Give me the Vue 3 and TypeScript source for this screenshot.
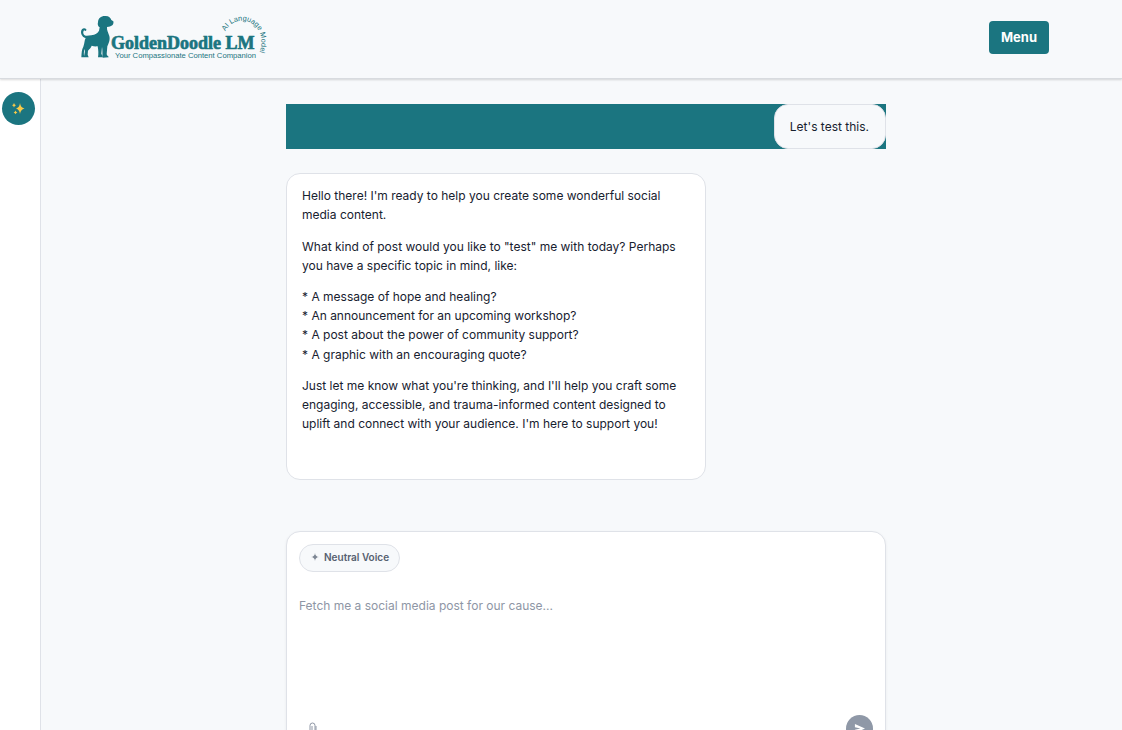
<script setup lang="ts">
import { ref } from 'vue'

interface Message {
  role: 'user' | 'assistant'
  paragraphs: string[]
}

const messages: Message[] = [
  { role: 'user', paragraphs: ["Let's test this."] },
  {
    role: 'assistant',
    paragraphs: [
      "Hello there! I'm ready to help you create some wonderful social media content.",
      'What kind of post would you like to "test" me with today? Perhaps you have a specific topic in mind, like:',
      '* A message of hope and healing?\n* An announcement for an upcoming workshop?\n* A post about the power of community support?\n* A graphic with an encouraging quote?',
      "Just let me know what you're thinking, and I'll help you craft some engaging, accessible, and trauma-informed content designed to uplift and connect with your audience. I'm here to support you!",
    ],
  },
]

const draft = ref('')
</script>

<template>
  <div class="app">
    <header class="header">
      <a class="brand" href="#" aria-label="GoldenDoodle LM home">
        <svg class="logo" viewBox="30 27 570 144" aria-hidden="true">
          <path
            class="dog"
            d="M84 55 C84 42 94 35 107 36 C117 36 122 42 124 48 L130 52 C132 60 127 68 116 68 L111 69 C110 79 115 87 118 96 C121 107 116 119 112 127 L110 151 C111 156 116 156 116 160 L98 161 C97 155 98 139 96 129 L94 149 C96 154 98 155 97 160 L84 160 C86 150 85 137 83 127 C76 128 70 127 65 125 C63 132 58 135 54 140 L53 152 L56 160 L42 160 C43 149 46 141 45 135 C42 141 40 148 43 159 L34 160 C35 147 35 137 40 128 C44 119 43 108 47 102 C39 101 33 92 33 84 C33 74 43 69 49 76 C50 80 46 83 43 79 C39 81 38 90 44 94 C49 97 56 95 64 94 C76 92 83 88 87 80 L89 70 C84 68 82 61 84 55 Z"
          />
          <text class="word" x="123" y="136">GoldenDoodle LM</text>
          <text class="tag" x="135" y="161">Your Compassionate Content Companion</text>
          <path
            id="logo-arc"
            class="arc"
            d="M466 82 C480 55 505 47 528 51 C558 58 574 85 574 112 C574 128 571 140 565 156 L558 170"
          />
          <text class="ring"><textPath href="#logo-arc">AI Language Model</textPath></text>
        </svg>
      </a>
      <button class="menu" type="button">Menu</button>
    </header>

    <div class="body">
      <aside class="rail">
        <button class="spark" type="button" aria-label="New chat">
          <svg viewBox="0 0 14 14" aria-hidden="true">
            <path class="gold" d="M8 1 Q8.5 5.5 12.5 6.5 Q8.5 7.5 8 12 Q7.5 7.5 4 6.5 Q7.5 5.5 8 1Z" />
            <path class="gold" d="M2 1 Q2.5 2.7 4 3.2 Q2.5 3.7 2 5.4 Q1.5 3.7 0 3.2 Q1.5 2.7 2 1Z" />
            <path class="gold" d="M3.5 8.5 Q3.9 10 5.4 10.4 Q3.9 10.8 3.5 12.3 Q3.1 10.8 1.6 10.4 Q3.1 10 3.5 8.5Z" />
          </svg>
        </button>
      </aside>

      <main class="main">
        <div class="column">
          <section v-for="(message, i) in messages" :key="i" :class="['message', message.role]">
            <div class="bubble">
              <p v-for="(paragraph, j) in message.paragraphs" :key="j">{{ paragraph }}</p>
            </div>
          </section>

          <form class="composer" @submit.prevent>
            <button class="voice" type="button">
              <svg viewBox="0 0 10 10" aria-hidden="true">
                <path d="M5 1 Q5.3 4.7 9 5 Q5.3 5.3 5 9 Q4.7 5.3 1 5 Q4.7 4.7 5 1Z" />
              </svg>
              <span>Neutral Voice</span>
            </button>
            <textarea
              v-model="draft"
              class="prompt"
              aria-label="Message"
              placeholder="Fetch me a social media post for our cause..."
            ></textarea>
            <div class="tools">
              <button class="attach" type="button" aria-label="Attach a file">
                <svg viewBox="0 0 10 14" aria-hidden="true">
                  <path d="M2 10 V3.5 Q2 1 4.5 1 Q7 1 7 3.5 V10 Q7 12.5 5 12.5 Q4 12.5 4 10.5 V4 M8 4 V10" />
                </svg>
              </button>
              <button class="send" type="submit" aria-label="Send">
                <svg viewBox="0 0 12 12" aria-hidden="true">
                  <path d="M1 1 L12 6 L1 11 V7.3 L7 6 L1 4.7Z" />
                </svg>
              </button>
            </div>
          </form>
        </div>
      </main>
    </div>
  </div>
</template>

<style>
body {
  margin: 0;
}
</style>

<style scoped>
.app {
  --teal: #1b7580;
  --line: #dfe2e8;
  height: 100vh;
  display: flex;
  flex-direction: column;
  overflow: hidden;
  background: #f7f9fb;
  color: #17212f;
  font: 12px/1.6 Inter, "Liberation Sans", sans-serif;
}
*,
*::before {
  box-sizing: border-box;
}
button,
textarea {
  font: inherit;
}
button {
  padding: 0;
  border: 0;
  cursor: pointer;
}
.header {
  position: relative;
  flex: none;
  display: flex;
  align-items: center;
  justify-content: space-between;
  padding: 13px 73px 17px 80px;
  border-bottom: 1px solid #d8dbdf;
  box-shadow: 0 1px 2px rgb(0 0 0 / 15%);
}
.brand,
.logo {
  display: block;
}
.logo {
  width: 190px;
  height: 48px;
  overflow: visible;
}
.dog,
.word,
.tag,
.ring {
  fill: var(--teal);
}
.word {
  font: bold 54px "Liberation Serif", serif;
  stroke: var(--teal);
  stroke-width: 2px;
}
.tag {
  font: 23px "Liberation Sans", sans-serif;
}
.ring {
  font: 22px "Liberation Sans", sans-serif;
}
.arc {
  fill: none;
}
.menu {
  height: 33px;
  padding: 0 12px;
  border-radius: 4px;
  background: var(--teal);
  color: #fff;
  font-size: 13px;
  font-weight: 700;
}
.body {
  flex: 1;
  min-height: 0;
  display: flex;
}
.rail {
  flex: none;
  width: 41px;
  padding: 13px 2px;
  border-right: 1px solid var(--line);
  background: #fff;
}
.spark {
  width: 33px;
  height: 33px;
  display: grid;
  place-items: center;
  border-radius: 50%;
  background: var(--teal);
}
.spark svg {
  width: 14px;
  height: 14px;
}
.gold {
  fill: #f7c948;
}
.main {
  flex: 1;
  padding: 25px 16px 0 25px;
}
.column {
  max-width: 600px;
  margin: 0 auto;
}
.message {
  display: flex;
  margin-bottom: 24px;
}
.user {
  justify-content: flex-end;
  background: var(--teal);
}
.bubble {
  max-width: 70%;
  padding: 12px 15px;
  border: 1px solid var(--line);
  border-radius: 14px;
  background: #fff;
}
.user .bubble {
  padding-right: 16px;
  background: #f7f9fb;
}
.assistant .bubble {
  padding-bottom: 46px;
}
.bubble p {
  margin: 0 0 12px;
  white-space: pre-line;
}
.bubble p:last-child {
  margin-bottom: 0;
}
.composer {
  margin-top: 51px;
  padding: 12px;
  border: 1px solid var(--line);
  border-radius: 14px;
  background: #fff;
  box-shadow: 0 1px 3px rgb(0 0 0 / 6%);
}
.voice {
  height: 28px;
  display: flex;
  align-items: center;
  gap: 4px;
  padding: 0 10px 3px;
  border: 1px solid var(--line);
  border-radius: 14px;
  background: #f7f9fb;
  color: #566070;
  font-size: 10px;
  font-weight: 600;
}
.voice svg {
  width: 10px;
  height: 10px;
  fill: #7d8693;
}
.prompt {
  display: block;
  width: 100%;
  height: 119px;
  margin-top: 24px;
  padding: 0;
  border: 0;
  outline: 0;
  resize: none;
  background: transparent;
  color: inherit;
}
.prompt::placeholder {
  color: #8e96a5;
  opacity: 1;
}
.tools {
  display: flex;
  align-items: center;
  justify-content: space-between;
}
.attach {
  width: 27px;
  height: 27px;
  display: grid;
  place-items: center;
  background: transparent;
}
.attach svg {
  width: 10px;
  height: 14px;
  fill: none;
  stroke: #8e96a5;
}
.send {
  width: 27px;
  height: 27px;
  display: grid;
  place-items: center;
  border-radius: 50%;
  background: #8f98a7;
}
.send svg {
  width: 11px;
  height: 11px;
  fill: #fff;
}
</style>
